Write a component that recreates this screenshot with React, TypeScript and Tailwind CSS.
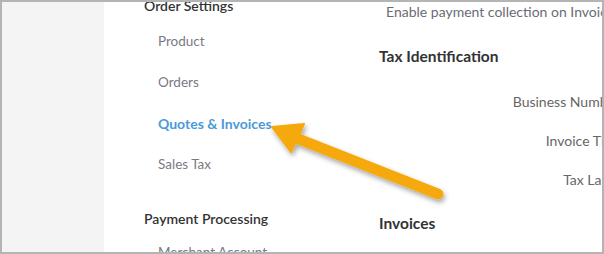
import React from 'react';

const navGroups = [
  { title: 'Order Settings', items: ['Product', 'Orders', 'Quotes & Invoices', 'Sales Tax'], active: 'Quotes & Invoices' },
];

const Arrow: React.FC = () => (
  <svg
    className="absolute -left-[2px] -top-[2px] pointer-events-none"
    width={604}
    height={254}
    viewBox="0 0 604 254"
  >
    <defs>
      <filter id="shadow" x="-20%" y="-20%" width="140%" height="140%">
        <feDropShadow dx="1.5" dy="3" stdDeviation="2.5" floodColor="#000" floodOpacity="0.35" />
      </filter>
    </defs>
    <g filter="url(#shadow)" fill="#f6a90c" stroke="#f6a90c">
      <line x1="296" y1="138" x2="438" y2="194" strokeWidth="11" strokeLinecap="round" />
      <polygon points="272,127 304,124 291,152" strokeWidth="2" strokeLinejoin="round" />
    </g>
  </svg>
);

export default function App() {
  return (
    <div
      className="relative w-[604px] h-[254px] border-2 border-[#b4b4b4] bg-white overflow-hidden flex"
      style={{ fontFamily: 'Lato, "Open Sans", sans-serif' }}
    >
      <div className="w-[102px] shrink-0 bg-[#f4f4f4]" />

      <nav className="w-[275px] shrink-0 pl-[40px] -mt-[6px]">
        {navGroups.map(g => (
          <div key={g.title}>
            <div className="h-[20px] leading-[20px] text-[14px] font-semibold text-[#333]">{g.title}</div>
            <ul className="mt-[5px]">
              {g.items.map(item => (
                <li
                  key={item}
                  className={`h-[41px] leading-[41px] pl-[14px] ${
                    item === g.active ? 'text-[14px] font-bold text-[#4a9ad8]' : 'text-[13.5px] text-[#7a7a84]'
                  }`}
                >
                  {item}
                </li>
              ))}
            </ul>
          </div>
        ))}
        <div className="mt-[24px] h-[20px] leading-[20px] text-[14px] font-semibold text-[#333]">Payment Processing</div>
        <div className="mt-[3px] h-[41px] leading-[41px] pl-[14px] text-[13.5px] text-[#7a7a84]">Merchant Account</div>
      </nav>

      <main className="flex-1 min-w-0 -mt-[2px]">
        <div className="pl-[7px] h-[24px] leading-[24px] text-[14px] text-[#6b6b75] whitespace-nowrap">
          Enable payment collection on Invoices
        </div>
        <h3 className="mt-[22px] h-[20px] leading-[20px] text-[15.5px] font-bold text-[#333]">Tax Identification</h3>
        <div className="w-[241px] text-right text-[14px] text-[#666] whitespace-nowrap">
          <div className="mt-[16px] h-[39px] leading-[39px]">Business Number</div>
          <div className="h-[39px] leading-[39px]">Invoice Title</div>
          <div className="h-[39px] leading-[39px]">Tax Label</div>
        </div>
        <h3 className="mt-[14px] h-[20px] leading-[20px] text-[15.5px] font-bold text-[#333]">Invoices</h3>
      </main>

      <Arrow />
    </div>
  );
}
